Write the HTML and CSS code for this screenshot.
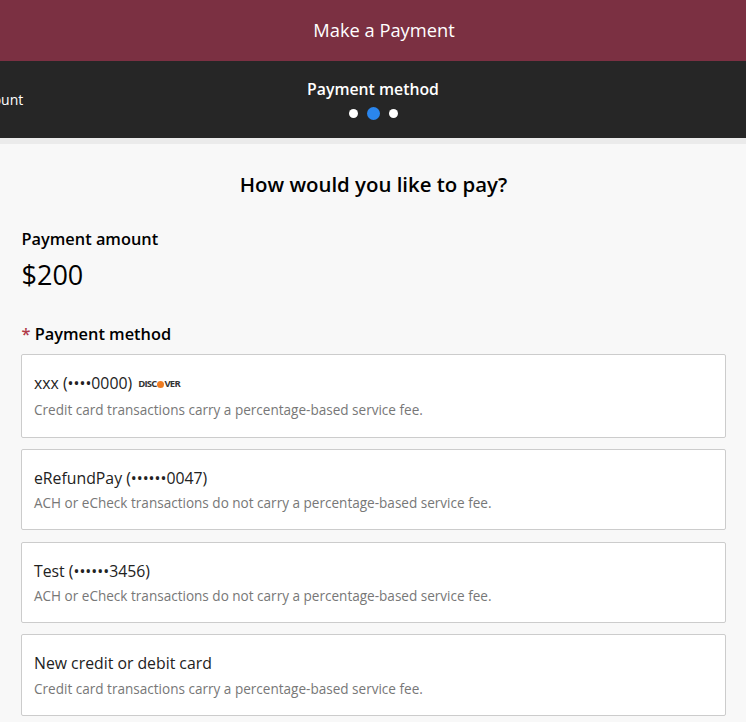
FILE: index.html
```html
<!DOCTYPE html>
<html lang="en">
<head>
    <meta charset="UTF-8">
    <title>Make a Payment</title>
    <link rel="stylesheet" href="styles.css">
</head>
<body>

<header class="title-bar">Make a Payment</header>

<nav class="stepper">
    <div class="step">Payment amount</div>
    <div class="step step-current">
        <div class="step-name">Payment method</div>
        <div class="dots">
            <span class="dot"></span>
            <span class="dot dot-active"></span>
            <span class="dot"></span>
        </div>
    </div>
</nav>

<main class="content">
    <h1 class="question">How would you like to pay?</h1>

    <div class="label">Payment amount</div>
    <div class="amount">$200</div>

    <div class="label method-label"><span class="required">*</span> Payment method</div>

    <div class="methods">
        <div class="method method-first">
            <div class="method-name">xxx (••••0000)
                <span class="discover">DISC<span class="discover-dot"></span>VER</span>
            </div>
            <div class="method-note">Credit card transactions carry a percentage-based service fee.</div>
        </div>
        <div class="method">
            <div class="method-name">eRefundPay (••••••0047)</div>
            <div class="method-note">ACH or eCheck transactions do not carry a percentage-based service fee.</div>
        </div>
        <div class="method">
            <div class="method-name">Test (••••••3456)</div>
            <div class="method-note">ACH or eCheck transactions do not carry a percentage-based service fee.</div>
        </div>
        <div class="method method-last">
            <div class="method-name">New credit or debit card</div>
            <div class="method-note">Credit card transactions carry a percentage-based service fee.</div>
        </div>
    </div>
</main>

</body>
</html>
```

FILE: styles.css
```css
html, body {
    margin: 0;
    padding: 0;
}

body {
    height: 722px;
    overflow: hidden;
    background: #f8f8f8;
    font-family: "Open Sans", sans-serif;
    color: #000;
}

.title-bar {
    height: 61px;
    padding-left: 22px;
    line-height: 60px;
    background: #7b3042;
    color: #fff;
    font-size: 18.3px;
    text-align: center;
}

.stepper {
    display: grid;
    grid-template-columns: 406px 406px 406px;
    justify-content: center;
    align-items: center;
    height: 77px;
    overflow: hidden;
    background: #262626;
    border-bottom: 6px solid #ebebeb;
    color: #fff;
    font-size: 14px;
    text-align: center;
}

.step-name {
    margin-top: -2px;
    font-size: 15.8px;
    font-weight: 600;
    line-height: 22px;
}

.dots {
    display: flex;
    justify-content: center;
    align-items: center;
    gap: 9px;
    margin-top: 7px;
}

.dot {
    width: 9px;
    height: 9px;
    border-radius: 50%;
    background: #fff;
}

.dot-active {
    width: 13px;
    height: 13px;
    background: #2a86ee;
}

.content {
    padding: 0 20px 0 21px;
}

.question {
    margin: 0;
    padding-top: 27px;
    font-size: 20.4px;
    font-weight: 600;
    line-height: 27px;
    text-align: center;
}

.label {
    margin-top: 30px;
    padding-left: 0.5px;
    font-size: 16.35px;
    font-weight: 600;
    line-height: 22px;
}

.amount {
    margin-top: 7px;
    padding-left: 0.5px;
    font-size: 27px;
    line-height: 36px;
}

.method-label {
    margin-top: 30px;
}

.required {
    color: #b03a48;
}

.methods {
    display: flex;
    flex-direction: column;
    gap: 11.4px;
    margin-top: 9px;
}

.method {
    height: 81px;
    box-sizing: border-box;
    padding: 17px 12px 0;
    background: #fff;
    border: 1px solid #ccc;
    border-radius: 2px;
}

.method-first {
    height: 84px;
}

.method-last {
    height: 81.5px;
}

.method-name {
    color: #222;
    font-size: 15.8px;
    line-height: 22px;
}

.method-note {
    margin-top: 5px;
    color: #777;
    font-size: 13.55px;
    line-height: 19px;
}

.method-first .method-note {
    margin-top: 5.5px;
}

.method-last .method-note {
    margin-top: 6px;
}

.discover {
    margin-left: 2px;
    color: #333;
    font-size: 9.5px;
    font-weight: 700;
    letter-spacing: -0.8px;
    vertical-align: 2px;
}

.discover-dot {
    display: inline-block;
    width: 7px;
    height: 7px;
    margin: 0 0.5px;
    border-radius: 50%;
    background: #ee7c22;
    vertical-align: -0.5px;
}
```
